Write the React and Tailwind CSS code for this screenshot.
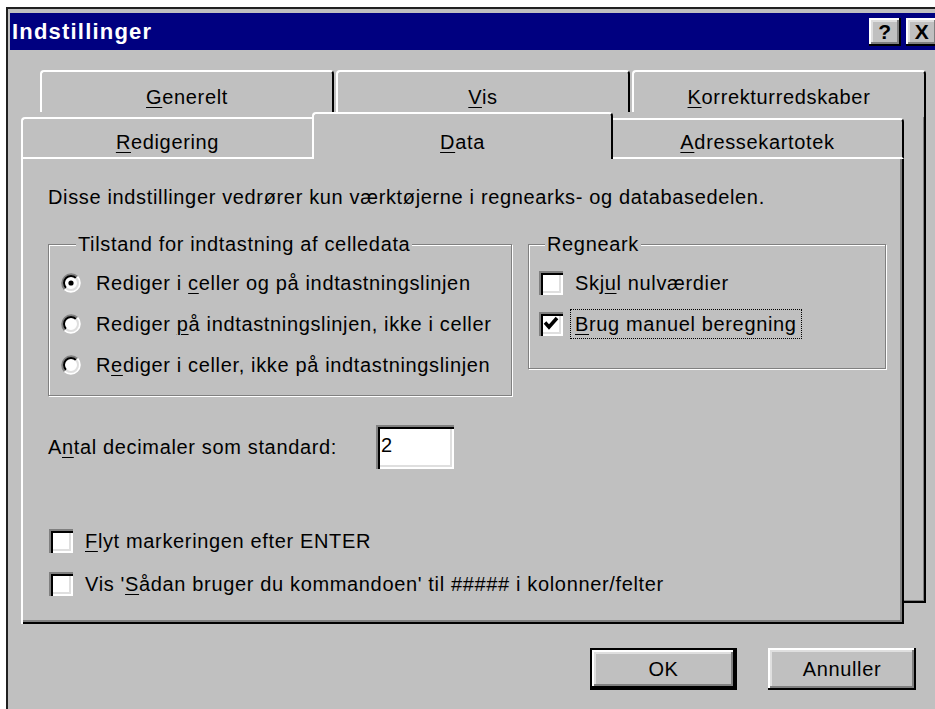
import React from "react";

// Win95 bevels
const RAISED =
  "bg-[#c0c0c0] shadow-[inset_-2px_-2px_0_#000,inset_2px_2px_0_#fff,inset_-4px_-4px_0_#808080,inset_4px_4px_0_#dfdfdf]";
const SUNKEN =
  "bg-white shadow-[inset_2px_2px_0_#808080,inset_4px_4px_0_#000,inset_-2px_-2px_0_#fff,inset_-4px_-4px_0_#dfdfdf]";

const Key = ({ children }) => (
  <span className="underline decoration-1 underline-offset-[3px]">{children}</span>
);

function Radio({ checked }) {
  return (
    <svg width="20" height="20" viewBox="0 0 20 20" className="shrink-0">
      <circle cx="10" cy="10" r="8" fill="#fff" />
      <path d="M3.64 16.36A9 9 0 0 1 16.36 3.64" fill="none" stroke="#808080" strokeWidth="2" />
      <path d="M16.36 3.64A9 9 0 0 1 3.64 16.36" fill="none" stroke="#fff" strokeWidth="2" />
      <path d="M5.05 14.95A7 7 0 0 1 14.95 5.05" fill="none" stroke="#000" strokeWidth="2" />
      <path d="M14.95 5.05A7 7 0 0 1 5.05 14.95" fill="none" stroke="#dfdfdf" strokeWidth="2" />
      {checked && <circle cx="10" cy="10" r="2.6" fill="#000" />}
    </svg>
  );
}

function Check({ checked }) {
  return (
    <span className={`flex h-[24px] w-[24px] shrink-0 items-center justify-center ${SUNKEN}`}>
      {checked && (
        <svg width="16" height="16" viewBox="0 0 16 16">
          <path d="M2 6.5l4 4.5 8-9" fill="none" stroke="#000" strokeWidth="3.5" />
        </svg>
      )}
    </span>
  );
}

function CheckRow({ checked, focus, children }) {
  return (
    <div className="flex h-[41px] items-center gap-[7px]">
      <Check checked={checked} />
      <span
        className={`border px-[4px] py-[3px] ${focus ? "border-dotted border-black" : "border-transparent"}`}
      >
        {children}
      </span>
    </div>
  );
}

function RadioRow({ checked, children }) {
  return (
    <div className="flex h-[41px] items-center gap-[15px]">
      <Radio checked={checked} />
      <span>{children}</span>
    </div>
  );
}

function BackTab({ children }) {
  return (
    <div className="flex h-[47px] flex-1 justify-center rounded-t-[4px] border-l-2 border-t-2 border-r-2 border-white border-r-black pt-[14px]">
      <span>{children}</span>
    </div>
  );
}

export default function App() {
  return (
    <div className="h-[709px] w-[935px] overflow-hidden bg-white pl-[6px] pt-[7px] font-['Liberation_Sans',Arial,sans-serif] text-[20px] leading-[22px] tracking-[0.65px] text-black">
      <div className="h-[720px] w-[940px] border-l-2 border-t-2 border-[#202020] bg-[#c0c0c0] pl-[2px] pr-[2px] pt-[4px]">
        {/* title bar */}
        <div className="flex h-[37px] items-center justify-between bg-[#000080] pl-[2px] pr-[6px]">
          <span className="text-[22px] font-bold tracking-[1.2px] text-white">Indstillinger</span>
          <div className="flex gap-[5px]">
            <span className={`flex h-[28px] w-[32px] items-center justify-center text-[21px] font-bold ${RAISED}`}>?</span>
            <span className={`flex h-[28px] w-[32px] items-center justify-center text-[21px] font-bold ${RAISED}`}>X</span>
          </div>
        </div>

        {/* stacked tab pages */}
        <div className="ml-[11px] mt-[20px] grid w-[905px]">
          <div className="col-start-1 row-start-1 ml-[19px] mb-[21px] flex h-[533px] flex-col">
            <div className="flex gap-[2px]">
              <BackTab><Key>G</Key>enerelt</BackTab>
              <BackTab><Key>V</Key>is</BackTab>
              <BackTab><Key>K</Key>orrekturredskaber</BackTab>
            </div>
            <div className="flex-1 shadow-[inset_-2px_-2px_0_#000,inset_-3px_-3px_0_#808080]" />
          </div>

          <div className="col-start-1 row-start-1 mr-[22px] mt-[42px] flex h-[512px] flex-col bg-[#c0c0c0]">
            <div className="flex h-[47px] items-end">
              <div className="flex h-[42px] w-[291px] justify-center rounded-tl-[4px] border-l-2 border-t-2 border-b-2 border-white pt-[12px]">
                <span><Key>R</Key>edigering</span>
              </div>
              <div className="flex h-[47px] w-[301px] justify-center rounded-t-[4px] border-l-2 border-t-2 border-r-2 border-white border-r-black pt-[17px]">
                <span><Key>D</Key>ata</span>
              </div>
              <div className="flex h-[41px] flex-1 justify-center rounded-tr-[4px] border-t-2 border-r-2 border-b-2 border-white border-r-black pt-[11px]">
                <span><Key>A</Key>dressekartotek</span>
              </div>
            </div>

            <div className="flex flex-1 flex-col pl-[27px] pt-[27px] shadow-[inset_2px_0_0_#fff,inset_-2px_-2px_0_#000,inset_-4px_-4px_0_#808080]">
              <p>Disse indstillinger vedrører kun værktøjerne i regnearks- og databasedelen.</p>

              <div className="mt-[25px] flex items-start gap-[16px]">
                <fieldset className="w-[464px] border border-[#808080] pb-[10px] pl-[12px] pt-[7px] shadow-[inset_1px_1px_0_#fff,1px_1px_0_#fff]">
                  <legend className="ml-[15px] bg-[#c0c0c0] px-[2px]">Tilstand for indtastning af celledata</legend>
                  <RadioRow checked>Rediger i <Key>c</Key>eller og på indtastningslinjen</RadioRow>
                  <RadioRow>Rediger <Key>p</Key>å indtastningslinjen, ikke i celler</RadioRow>
                  <RadioRow>R<Key>e</Key>diger i celler, ikke på indtastningslinjen</RadioRow>
                </fieldset>

                <fieldset className="w-[358px] border border-[#808080] pb-[24px] pl-[10px] pt-[7px] shadow-[inset_1px_1px_0_#fff,1px_1px_0_#fff]">
                  <legend className="ml-[6px] bg-[#c0c0c0] px-[2px]">Regneark</legend>
                  <CheckRow>Skj<Key>u</Key>l nulværdier</CheckRow>
                  <CheckRow checked focus><Key>B</Key>rug manuel beregning</CheckRow>
                </fieldset>
              </div>

              <div className="mt-[29px] flex items-center">
                <span className="w-[328px]">A<Key>n</Key>tal decimaler som standard:</span>
                <div className={`flex h-[44px] w-[78px] items-center pb-[4px] pl-[5px] ${SUNKEN}`}>2</div>
              </div>

              <div className="mt-[50px] flex flex-col">
                <div className="flex h-[43px] items-center gap-[7px] pl-[1px]">
                  <Check />
                  <span className="border border-transparent px-[4px]"><Key>F</Key>lyt markeringen efter ENTER</span>
                </div>
                <div className="flex h-[43px] items-center gap-[7px] pl-[1px]">
                  <Check />
                  <span className="border border-transparent px-[4px]">Vis '<Key>S</Key>ådan bruger du kommandoen' til ##### i kolonner/felter</span>
                </div>
              </div>
            </div>
          </div>
        </div>

        {/* dialog buttons */}
        <div className="ml-[11px] mt-[24px] flex w-[905px] justify-end gap-[31px] pr-[10px]">
          <div className="h-[42px] w-[147px] border-2 border-black">
            <div className={`flex h-full w-full items-center justify-center ${RAISED}`}>OK</div>
          </div>
          <div className={`flex h-[42px] w-[148px] items-center justify-center ${RAISED}`}>Annuller</div>
        </div>
      </div>
    </div>
  );
}
